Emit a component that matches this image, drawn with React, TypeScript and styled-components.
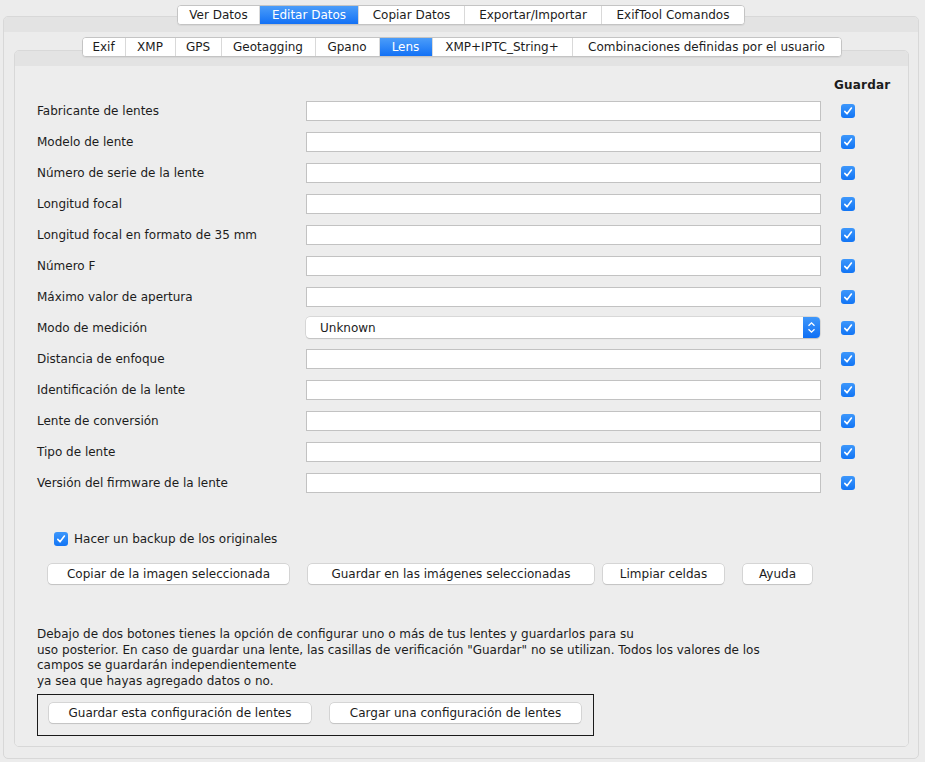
import React from 'react';
import styled, { createGlobalStyle } from 'styled-components';

const GlobalStyle = createGlobalStyle`
  html, body { margin: 0; padding: 0; background: #ececec; }
  body {
    font-family: "DejaVu Sans", "Liberation Sans", sans-serif;
    font-size: 12px;
    color: #1c1c1c;
  }
  * { box-sizing: border-box; }
`;

const Window = styled.div`
  width: 925px;
  height: 762px;
  padding: 5px 6px 0 3px;
  background: #ececec;
  display: flex;
  flex-direction: column;
`;

const TabRow = styled.div`
  display: flex;
  justify-content: center;
  position: relative;
  z-index: 2;
  height: 20px;
`;

const TabGroup = styled.div`
  display: flex;
  background: #fff;
  border: 1px solid #c4c4c4;
  border-radius: 4px;
  overflow: hidden;
  box-shadow: 0 1px 1px rgba(0, 0, 0, 0.06);
`;

const Tab = styled.div<{ $active?: boolean; $w: number }>`
  width: ${p => p.$w}px;
  height: 18px;
  line-height: 18px;
  text-align: center;
  white-space: nowrap;
  border-left: 1px solid #d9d9d9;
  &:first-child { border-left: none; }
  background: ${p => (p.$active ? 'linear-gradient(#4b9df9, #1371f5)' : '#fff')};
  color: ${p => (p.$active ? '#fff' : '#1c1c1c')};
`;

const Panel = styled.div<{ $mt: number; $mb: number }>`
  margin-top: ${p => p.$mt}px;
  margin-bottom: ${p => p.$mb}px;
  flex: 1;
  border: 1px solid #d8d8d8;
  border-radius: 5px;
  background: #ececec;
  display: flex;
  flex-direction: column;
  overflow: hidden;
`;

const Band = styled.div`
  height: 15px;
  background: #e3e3e3;
  flex: none;
`;

const PanelBody = styled.div`
  flex: 1;
  display: flex;
  flex-direction: column;
  padding: 5px 9px 0 10px;
`;

const InnerBody = styled.div`
  flex: 1;
  background: #ededed;
  padding: 11px 0 0 22px;
  display: flex;
  flex-direction: column;
`;

const HeaderRow = styled.div`
  display: grid;
  grid-template-columns: 269px 515px 69px;
  height: 16px;
  margin-bottom: 2px;
`;

const HeaderLabel = styled.div`
  grid-column: 3;
  padding-left: 13px;
  font-weight: bold;
  font-size: 12px;
  letter-spacing: 0.2px;
  line-height: 16px;
  white-space: nowrap;
`;

const FieldRow = styled.div`
  display: grid;
  grid-template-columns: 269px 515px 69px;
  height: 31px;
  align-items: center;
`;

const Label = styled.div`
  white-space: nowrap;
`;

const TextInput = styled.div`
  height: 20px;
  background: #fff;
  border: 1px solid #c2c2c2;
`;

const Select = styled.div`
  height: 21px;
  width: 514px;
  background: #fff;
  border-radius: 4px;
  box-shadow: 0 0 0 0.5px #c4c4c4, 0 1px 1px rgba(0, 0, 0, 0.18);
  display: flex;
  align-items: center;
  justify-content: space-between;
  padding-left: 14px;
  overflow: hidden;
`;

const Stepper = styled.div`
  width: 17px;
  height: 21px;
  background: linear-gradient(#3f97fa, #0e6ff5);
  display: flex;
  align-items: center;
  justify-content: center;
`;

const CheckBox = styled.div<{ $ml?: number }>`
  width: 14px;
  height: 14px;
  margin-left: ${p => p.$ml ?? 0}px;
  border-radius: 3px;
  background: linear-gradient(#3d97fb, #1275f5);
  display: flex;
  align-items: center;
  justify-content: center;
  flex: none;
`;

const BackupRow = styled.div`
  display: flex;
  align-items: center;
  gap: 6px;
  height: 20px;
  margin: 31px 0 0 17px;
`;

const ButtonRow = styled.div`
  display: flex;
  align-items: center;
  margin: 15px 0 0 11px;
`;

const Button = styled.div<{ $w: number; $ml?: number }>`
  width: ${p => p.$w}px;
  margin-left: ${p => p.$ml ?? 0}px;
  height: 20px;
  background: #fff;
  border-radius: 4px;
  box-shadow: 0 0 0 0.5px #bdbdbd, 0 1px 1px rgba(0, 0, 0, 0.15);
  display: flex;
  align-items: center;
  justify-content: center;
  white-space: nowrap;
  flex: none;
`;

const Paragraph = styled.div`
  margin-top: 43px;
  line-height: 15.5px;
  white-space: nowrap;
`;

const ConfigBox = styled.div`
  margin-top: 5px;
  width: 557px;
  height: 42px;
  border: 1px solid #1a1a1a;
  padding: 8px 0 0 11px;
  display: flex;
`;

const Check = () => (
  <svg width="10" height="10" viewBox="0 0 10 10">
    <polyline points="1.8,5.4 4,7.8 8.4,2" fill="none" stroke="#fff" strokeWidth="1.6" strokeLinecap="round" strokeLinejoin="round" />
  </svg>
);

const Arrows = () => (
  <svg width="9" height="13" viewBox="0 0 9 13">
    <polyline points="1.5,4.8 4.5,1.8 7.5,4.8" fill="none" stroke="#fff" strokeWidth="1.3" />
    <polyline points="1.5,8.2 4.5,11.2 7.5,8.2" fill="none" stroke="#fff" strokeWidth="1.3" />
  </svg>
);

const outerTabs: [string, number][] = [
  ['Ver Datos', 81],
  ['Editar Datos', 99],
  ['Copiar Datos', 106],
  ['Exportar/Importar', 137],
  ['ExifTool Comandos', 143],
];
const innerTabs: [string, number][] = [
  ['Exif', 42],
  ['XMP', 50],
  ['GPS', 46],
  ['Geotagging', 94],
  ['Gpano', 64],
  ['Lens', 53],
  ['XMP+IPTC_String+', 140],
  ['Combinaciones definidas por el usuario', 269],
];

const fields = [
  'Fabricante de lentes',
  'Modelo de lente',
  'Número de serie de la lente',
  'Longitud focal',
  'Longitud focal en formato de 35 mm',
  'Número F',
  'Máximo valor de apertura',
  'Modo de medición',
  'Distancia de enfoque',
  'Identificación de la lente',
  'Lente de conversión',
  'Tipo de lente',
  'Versión del firmware de la lente',
];

export default function App() {
  return (
    <>
      <GlobalStyle />
      <Window>
        <TabRow>
          <TabGroup>
            {outerTabs.map(([t, w]) => (
              <Tab key={t} $w={w} $active={t === 'Editar Datos'}>{t}</Tab>
            ))}
          </TabGroup>
        </TabRow>
        <Panel $mt={-9} $mb={3}>
          <Band />
          <PanelBody>
            <TabRow>
              <TabGroup>
                {innerTabs.map(([t, w]) => (
                  <Tab key={t} $w={w} $active={t === 'Lens'}>{t}</Tab>
                ))}
              </TabGroup>
            </TabRow>
            <Panel $mt={-7} $mb={11}>
              <Band />
              <InnerBody>
                <HeaderRow>
                  <HeaderLabel>Guardar</HeaderLabel>
                </HeaderRow>
                {fields.map(f => (
                  <FieldRow key={f}>
                    <Label>{f}</Label>
                    {f === 'Modo de medición' ? (
                      <Select>
                        <span>Unknown</span>
                        <Stepper><Arrows /></Stepper>
                      </Select>
                    ) : (
                      <TextInput />
                    )}
                    <CheckBox $ml={20}><Check /></CheckBox>
                  </FieldRow>
                ))}
                <BackupRow>
                  <CheckBox><Check /></CheckBox>
                  <span>Hacer un backup de los originales</span>
                </BackupRow>
                <ButtonRow>
                  <Button $w={241}>Copiar de la imagen seleccionada</Button>
                  <Button $w={286} $ml={19}>Guardar en las imágenes seleccionadas</Button>
                  <Button $w={121} $ml={9}>Limpiar celdas</Button>
                  <Button $w={69} $ml={19}>Ayuda</Button>
                </ButtonRow>
                <Paragraph>
                  Debajo de dos botones tienes la opción de configurar uno o más de tus lentes y guardarlos para su
                  <br />
                  uso posterior. En caso de guardar una lente, las casillas de verificación "Guardar" no se utilizan. Todos los valores de los
                  <br />
                  campos se guardarán independientemente
                  <br />
                  ya sea que hayas agregado datos o no.
                </Paragraph>
                <ConfigBox>
                  <Button $w={262}>Guardar esta configuración de lentes</Button>
                  <Button $w={251} $ml={19}>Cargar una configuración de lentes</Button>
                </ConfigBox>
              </InnerBody>
            </Panel>
          </PanelBody>
        </Panel>
      </Window>
    </>
  );
}
